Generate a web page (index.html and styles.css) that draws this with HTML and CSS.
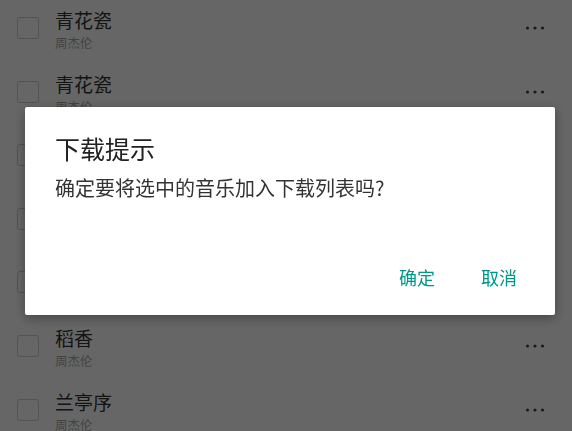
FILE: index.html
```html
<!DOCTYPE html>
<html lang="zh">
<head>
<meta charset="utf-8">
<title>下载提示</title>
<link rel="stylesheet" href="styles.css">
</head>
<body>
<ul class="song-list">
  <li class="song"><span class="check"></span><div class="info"><div class="title">青花瓷</div><div class="artist">周杰伦</div></div><svg class="more" width="20" height="6" viewBox="0 0 20 6"><circle cx="2.5" cy="3" r="1.6"/><circle cx="10" cy="3" r="1.6"/><circle cx="17.5" cy="3" r="1.6"/></svg></li>
  <li class="song"><span class="check"></span><div class="info"><div class="title">青花瓷</div><div class="artist">周杰伦</div></div><svg class="more" width="20" height="6" viewBox="0 0 20 6"><circle cx="2.5" cy="3" r="1.6"/><circle cx="10" cy="3" r="1.6"/><circle cx="17.5" cy="3" r="1.6"/></svg></li>
  <li class="song"><span class="check"></span><div class="info"><div class="title">晴天</div><div class="artist">周杰伦</div></div><svg class="more" width="20" height="6" viewBox="0 0 20 6"><circle cx="2.5" cy="3" r="1.6"/><circle cx="10" cy="3" r="1.6"/><circle cx="17.5" cy="3" r="1.6"/></svg></li>
  <li class="song"><span class="check"></span><div class="info"><div class="title">七里香</div><div class="artist">周杰伦</div></div><svg class="more" width="20" height="6" viewBox="0 0 20 6"><circle cx="2.5" cy="3" r="1.6"/><circle cx="10" cy="3" r="1.6"/><circle cx="17.5" cy="3" r="1.6"/></svg></li>
  <li class="song"><span class="check"></span><div class="info"><div class="title">夜曲</div><div class="artist">周杰伦</div></div><svg class="more" width="20" height="6" viewBox="0 0 20 6"><circle cx="2.5" cy="3" r="1.6"/><circle cx="10" cy="3" r="1.6"/><circle cx="17.5" cy="3" r="1.6"/></svg></li>
  <li class="song"><span class="check"></span><div class="info"><div class="title">稻香</div><div class="artist">周杰伦</div></div><svg class="more" width="20" height="6" viewBox="0 0 20 6"><circle cx="2.5" cy="3" r="1.6"/><circle cx="10" cy="3" r="1.6"/><circle cx="17.5" cy="3" r="1.6"/></svg></li>
  <li class="song"><span class="check"></span><div class="info"><div class="title">兰亭序</div><div class="artist">周杰伦</div></div><svg class="more" width="20" height="6" viewBox="0 0 20 6"><circle cx="2.5" cy="3" r="1.6"/><circle cx="10" cy="3" r="1.6"/><circle cx="17.5" cy="3" r="1.6"/></svg></li>
</ul>
<div class="overlay">
  <div class="dialog">
    <div class="dialog-title">下载提示</div>
    <div class="dialog-msg">确定要将选中的音乐加入下载列表吗?</div>
    <div class="dialog-actions">
      <button class="btn">确定</button>
      <button class="btn">取消</button>
    </div>
  </div>
</div>
</body>
</html>
```
FILE: styles.css
```css
html, body {
  margin: 0;
  padding: 0;
  background: #ffffff;
  overflow: hidden;
  font-family: "Noto Sans CJK SC", "Noto Sans", sans-serif;
}
.song-list {
  list-style: none;
  margin: -3.8px 0 0 0;
  padding: 0;
}
.song {
  height: 63.6px;
  display: flex;
  align-items: center;
  padding: 0 27px 0 17px;
}
.check {
  width: 22px;
  height: 22px;
  box-sizing: border-box;
  border: 1.5px solid #cfcfcf;
  border-radius: 3px;
  flex: none;
}
.info {
  flex: 1;
  margin-left: 16px;
  margin-top: 3px;
}
.title {
  font-size: 19px;
  line-height: 24px;
  color: #333333;
}
.artist {
  font-size: 12.5px;
  line-height: 16px;
  color: #a8a8a8;
  margin-top: 3px;
}
.more {
  fill: #444;
  flex: none;
}
.overlay {
  position: fixed;
  inset: 0;
  background: rgba(0, 0, 0, 0.6);
  padding: 107px 0 0 25px;
}
.dialog {
  width: 530px;
  height: 208px;
  box-sizing: border-box;
  background: #ffffff;
  border-radius: 2px;
  box-shadow: 0 3px 12px rgba(0, 0, 0, 0.35);
  padding: 26px 20px 20px 30px;
  display: flex;
  flex-direction: column;
}
.dialog-title {
  font-size: 25px;
  line-height: 30px;
  color: #212121;
}
.dialog-msg {
  margin-top: 11px;
  font-size: 20px;
  line-height: 28px;
  color: #333333;
}
.dialog-actions {
  margin-top: auto;
  display: flex;
  justify-content: flex-end;
  gap: 10px;
}
.btn {
  font-family: inherit;
  font-size: 18px;
  line-height: 36px;
  height: 36px;
  padding: 0 18px;
  border: none;
  background: transparent;
  color: #009688;
}
```
